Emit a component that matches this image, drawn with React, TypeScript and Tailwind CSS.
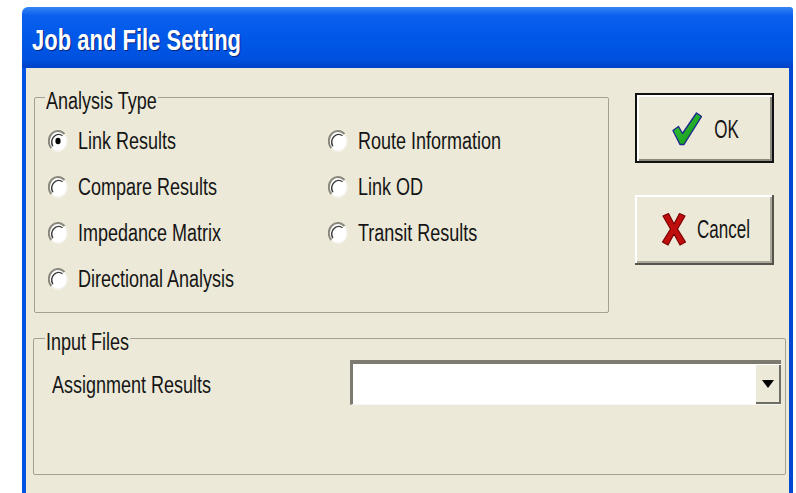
import type { ReactNode } from "react";

const leftOptions = ["Link Results", "Compare Results", "Impedance Matrix", "Directional Analysis"];
const rightOptions = ["Route Information", "Link OD", "Transit Results"];

// the dialog's text is drawn tall and narrow, so every label gets a vertical stretch
function Tall({ children, className = "" }: { children: ReactNode; className?: string }) {
  return <span className={`inline-block whitespace-nowrap scale-y-[1.32] ${className}`}>{children}</span>;
}

function Radio({ checked }: { checked?: boolean }) {
  return (
    <svg width="20" height="22" viewBox="0 0 20 22" aria-hidden="true">
      <ellipse cx="10" cy="11" rx="9" ry="10" fill="#fff" />
      <path d="M16.5 4.2 A9 10 0 0 0 3.3 18" stroke="#8a887c" strokeWidth="2" fill="none" />
      <path d="M14.5 5.8 A6.8 7.8 0 0 0 4.8 16.2" stroke="#3c3c3c" strokeWidth="1.4" fill="none" />
      <path d="M3.5 18.2 A9 10 0 0 0 16.6 4.3" stroke="#f4f2ea" strokeWidth="1.5" fill="none" />
      {checked && <ellipse cx="10" cy="11" rx="2.6" ry="3.2" fill="#000" />}
    </svg>
  );
}

function Option({ label, checked }: { label: string; checked?: boolean }) {
  return (
    <div className="flex h-[46px] items-center gap-[10px]">
      <Radio checked={checked} />
      <Tall>{label}</Tall>
    </div>
  );
}

function CheckIcon() {
  return (
    <svg width="30" height="34" viewBox="0 0 30 34" aria-hidden="true">
      <defs>
        <linearGradient id="ok-green" x1="0" y1="0" x2="1" y2="1">
          <stop offset="0" stopColor="#3fd23f" />
          <stop offset="1" stopColor="#0b8a12" />
        </linearGradient>
      </defs>
      <path
        d="M1 18.5 L6.5 14.5 L10.5 21.5 L24.5 1 L29.5 4.5 L12 32.5 L8 32.5 Z"
        fill="url(#ok-green)"
        stroke="#1b2a8c"
        strokeWidth="1.4"
        strokeLinejoin="round"
      />
    </svg>
  );
}

function CrossIcon() {
  return (
    <svg width="26" height="34" viewBox="0 0 26 34" aria-hidden="true">
      <path
        d="M2 4 L7.5 1.5 L13 12 L18.5 1.5 L24 4 L16.5 17 L24.5 30 L19 33 L13 22 L7 33 L1.5 30 L9.5 17 Z"
        fill="#c00d0d"
        stroke="#7a0000"
        strokeWidth="1.2"
        strokeLinejoin="round"
      />
    </svg>
  );
}

function Group({
  title,
  className,
  legendClass,
  children,
}: {
  title: string;
  className: string;
  legendClass: string;
  children: ReactNode;
}) {
  return (
    <fieldset className={`border border-[#a3a195] rounded-[2px] ${className}`}>
      <legend className={`h-[10px] px-[1px] leading-none ${legendClass}`}>
        <Tall className="-mt-[3px]">{title}</Tall>
      </legend>
      {children}
    </fieldset>
  );
}

export default function App() {
  return (
    <div className="h-[493px] w-[796px] overflow-hidden bg-white pl-[22px] pt-[7px] font-['Liberation_Sans',Arial,sans-serif] text-[18px] leading-none text-[#151515]">
      <div className="flex h-[486px] w-[771px] flex-col">
        {/* title bar */}
        <div className="flex h-[61px] shrink-0 items-center rounded-tl-[6px] rounded-tr-[3px] bg-[linear-gradient(180deg,#3584f4_0%,#0b5fee_14%,#0058e8_50%,#0051de_86%,#0041c6_100%)] pl-[10px] pt-[5px]">
          <span className="inline-block scale-y-[1.36] text-[22px] font-bold text-white [text-shadow:1px_1px_0_#0a2278]">
            Job and File Setting
          </span>
        </div>

        {/* dialog body */}
        <div className="flex-1 border-x-4 border-l-[#0054e3] border-r-[#0047d2] bg-[#ece9d8]">
          <div className="flex items-start">
            <Group
              title="Analysis Type"
              legendClass="-ml-[3px]"
              className="ml-[8px] mt-[24px] w-[575px] pb-[10px] pl-[13px] pt-[16px]"
            >
              <div className="grid grid-cols-[280px_1fr]">
                <div>
                  {leftOptions.map((o, i) => (
                    <Option key={o} label={o} checked={i === 0} />
                  ))}
                </div>
                <div>
                  {rightOptions.map((o) => (
                    <Option key={o} label={o} />
                  ))}
                </div>
              </div>
            </Group>

            <div className="ml-[26px] mt-[25px] flex flex-col gap-[32px]">
              <button className="h-[70px] w-[139px] border-2 border-[#111] bg-[#ece9d8] p-0">
                <span className="flex h-full w-full items-center justify-center gap-[12px] pl-[2px] pt-[2px] shadow-[inset_2px_2px_0_#fff,inset_-2px_-2px_0_#8d8b80]">
                  <CheckIcon />
                  <span className="inline-block scale-y-[1.5] text-[17px]">OK</span>
                </span>
              </button>
              <button className="h-[70px] w-[139px] border-b-2 border-r-2 border-[#55544d] bg-[#ece9d8] p-0 shadow-[inset_2px_2px_0_#fff,inset_-2px_-2px_0_#aca899]">
                <span className="flex h-full w-full items-center justify-center gap-[10px] pl-[4px]">
                  <CrossIcon />
                  <span className="inline-block scale-y-[1.5] text-[17px]">Cancel</span>
                </span>
              </button>
            </div>
          </div>

          <Group
            title="Input Files"
            legendClass="-ml-[7px]"
            className="ml-[7px] mr-[3px] mt-[20px] pb-[69px] pl-[18px] pr-[4px] pt-[17px]"
          >
            <div className="flex h-[45px] items-center">
              <div className="w-[298px] pt-[5px]">
                <Tall>Assignment Results</Tall>
              </div>
              <div className="flex h-full flex-1 border-l-[3px] border-t-[4px] border-b border-[#7d7b70] border-b-[#f7f6f0] bg-white">
                <div className="flex-1" />
                <div className="flex w-[26px] items-center justify-center bg-[#ece9d8] shadow-[inset_1px_1px_0_#fff,inset_-2px_-2px_0_#6f6e66]">
                  <svg width="12" height="8" viewBox="0 0 12 8" aria-hidden="true">
                    <path d="M0 0 H12 L6 8 Z" fill="#000" />
                  </svg>
                </div>
              </div>
            </div>
          </Group>
        </div>
      </div>
    </div>
  );
}
